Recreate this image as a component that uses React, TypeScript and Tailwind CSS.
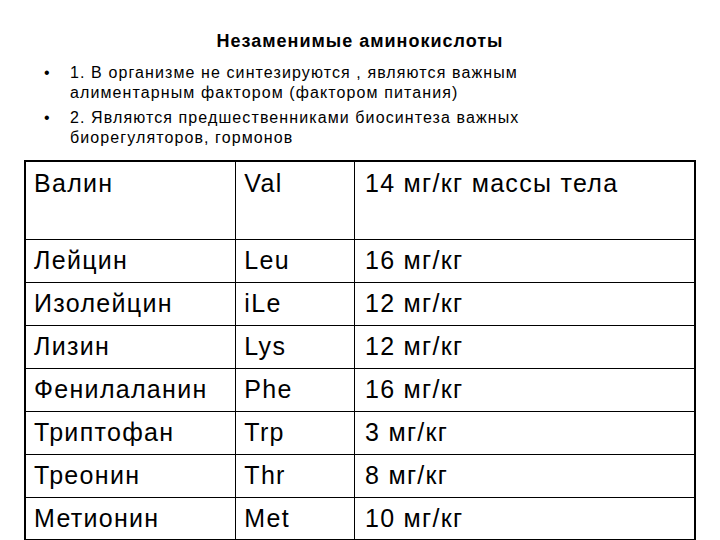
import React from "react";

const rows: [string, string, string][] = [
  ["Лейцин", "Leu", "16 мг/кг"],
  ["Изолейцин", "iLe", "12 мг/кг"],
  ["Лизин", "Lys", "12 мг/кг"],
  ["Фенилаланин", "Phe", "16 мг/кг"],
  ["Триптофан", "Trp", "3 мг/кг"],
  ["Треонин", "Thr", "8 мг/кг"],
  ["Метионин", "Met", "10 мг/кг"],
];

export default function App() {
  return (
    <div className="w-[720px] h-[540px] bg-white overflow-hidden text-black font-['Liberation_Sans',Arial,sans-serif]">
      <h1 className="pt-[31px] text-center font-bold text-[18px] leading-[20px] tracking-[1px]">
        Незаменимые аминокислоты
      </h1>
      <ul className="mt-[12px] ml-[44px] text-[16px] leading-[20px] tracking-[1.1px] flex flex-col gap-[5px]">
        <li className="flex">
          <span className="w-[26px] shrink-0">•</span>
          <span className="w-[470px]">
            1. В организме не синтезируются , являются важным алиментарным фактором (фактором питания)
          </span>
        </li>
        <li className="flex">
          <span className="w-[26px] shrink-0">•</span>
          <span className="w-[470px]">
            2. Являются предшественниками биосинтеза важных биорегуляторов, гормонов
          </span>
        </li>
      </ul>
      <table className="mt-[12px] ml-[24px] w-[672px] border-collapse border-2 border-black text-[25px] leading-[29px] tracking-[1.3px]">
        <colgroup>
          <col className="w-[211px]" />
          <col className="w-[119px]" />
          <col className="w-[342px]" />
        </colgroup>
        <tbody>
          <tr className="h-[78px]">
            <td className="border border-black align-top pt-[7px] pl-[8px]">Валин</td>
            <td className="border border-black align-top pt-[7px] pl-[8px]">Val</td>
            <td className="border border-black align-top pt-[7px] pl-[10px]">14 мг/кг массы тела</td>
          </tr>
          {rows.map(([a, b, c]) => (
            <tr key={a} className="h-[43px]">
              <td className="border border-black pl-[8px]">{a}</td>
              <td className="border border-black pl-[8px]">{b}</td>
              <td className="border border-black pl-[10px]">{c}</td>
            </tr>
          ))}
        </tbody>
      </table>
    </div>
  );
}
